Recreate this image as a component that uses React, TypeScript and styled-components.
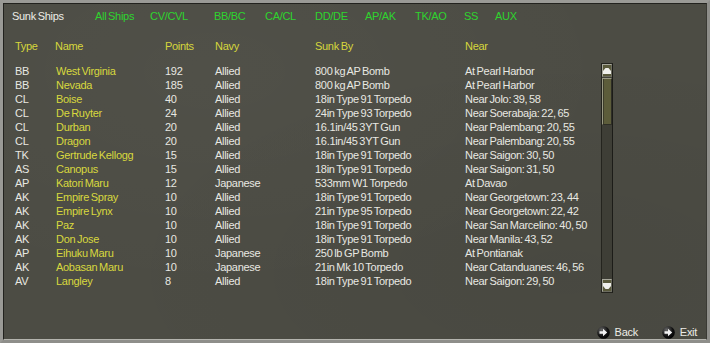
import React from "react";
import styled, { createGlobalStyle } from "styled-components";

const Global = createGlobalStyle`
  html, body { margin: 0; padding: 0; background: #4c4c44; }
  #root { width: 710px; height: 343px; }
  * { box-sizing: border-box; }
`;

const Frame = styled.div`
  width: 710px;
  height: 343px;
  border: 3px solid #8e8e8a;
  border-top-color: #9a9a96;
  border-left-color: #9a9a96;
  background: #4c4c44;
  font-family: "Liberation Sans", Arial, sans-serif;
  font-size: 11px;
  letter-spacing: -0.3px;
  word-spacing: -1px;
  color: #e8e8e2;
`;

const Inner = styled.div`
  height: 100%;
  border: 1px solid #22221e;
  border-bottom-color: #b4b4ae;
  border-right-color: #3a3a34;
  display: flex;
  flex-direction: column;
  background:
    radial-gradient(ellipse at 30% 20%, rgba(255,255,255,0.025), transparent 60%),
    radial-gradient(ellipse at 80% 80%, rgba(0,0,0,0.05), transparent 60%),
    #4c4c44;
`;

const TopBar = styled.div`
  display: flex;
  align-items: center;
  height: 14px;
  line-height: 14px;
  margin-top: 5px;
  padding-left: 8px;
`;

const Title = styled.div`
  width: 83px;
  color: #ececE6;
`;

const Tab = styled.div<{ $w: number }>`
  width: ${(p) => p.$w}px;
  color: #2ed42e;
  white-space: nowrap;
`;

const TableHead = styled.div`
  display: grid;
  grid-template-columns: 40px 110px 50px 100px 150px 1fr;
  height: 14px;
  line-height: 14px;
  margin-top: 16px;
  padding-left: 11px;
  color: #d6d63c;
`;

const Body = styled.div`
  display: flex;
  margin-top: 10px;
  padding-left: 11px;
  height: 230px;
`;

const List = styled.div`
  width: 586px;
  padding-top: 1px;
`;

const Row = styled.div`
  display: grid;
  grid-template-columns: 40px 110px 50px 100px 150px 1fr;
  height: 14px;
  line-height: 14px;
  white-space: nowrap;
`;

const Cell = styled.div<{ $name?: boolean }>`
  color: ${(p) => (p.$name ? "#d8d83e" : "#e8e8e2")};
  padding-left: ${(p) => (p.$name ? "1px" : "0")};
`;

const Scroll = styled.div`
  width: 12px;
  height: 230px;
  border: 1px solid #24241e;
  border-right-color: #1c1c18;
  background: #3e3e36;
  display: flex;
  flex-direction: column;
`;

const ScrollBtn = styled.div`
  height: 13px;
  border: 1px solid #a8a89c;
  border-right-color: #6c6c60;
  border-bottom-color: #6c6c60;
  background: #5a5a3c;
  display: flex;
  align-items: center;
  justify-content: center;
`;

const Thumb = styled.div`
  height: 47px;
  margin: 1px 0 0 0;
  border: 1px solid #9a9a84;
  border-right-color: #2e2e26;
  border-bottom-color: #2e2e26;
  background: #5c5c3a;
  box-shadow: inset 1px 0 0 #3c3c2a;
`;

const Track = styled.div`
  flex: 1;
`;

const Footer = styled.div`
  margin-top: auto;
  height: 12px;
  display: flex;
  justify-content: flex-end;
  align-items: center;
  padding-right: 9px;
  margin-bottom: 1px;
  gap: 24px;
`;

const NavButton = styled.div`
  display: flex;
  align-items: center;
  gap: 5px;
  color: #ececE6;
  font-size: 11px;
`;

const Arrow = ({ down }: { down?: boolean }) => (
  <svg width="8" height="6" viewBox="0 0 8 6" style={{ transform: down ? "rotate(180deg)" : undefined }}>
    <path d="M2.5 0 H5.5 L8 3 V6 H0 V3 Z" fill="#f0f0ec" />
  </svg>
);

const CircleArrow = () => (
  <svg width="13" height="13" viewBox="0 0 13 13">
    <defs>
      <radialGradient id="g" cx="0.35" cy="0.3" r="0.8">
        <stop offset="0" stopColor="#6a6a6a" />
        <stop offset="0.6" stopColor="#111" />
        <stop offset="1" stopColor="#000" />
      </radialGradient>
    </defs>
    <circle cx="6.5" cy="6.5" r="6.3" fill="url(#g)" />
    <path d="M2.5 5.2 H6 V2.8 L10.2 6.5 L6 10.2 V7.8 H2.5 Z" fill="#f2f2f2" />
  </svg>
);

const tabs: [string, number][] = [
  ["All Ships", 55],
  ["CV/CVL", 64],
  ["BB/BC", 51],
  ["CA/CL", 50],
  ["DD/DE", 50],
  ["AP/AK", 50],
  ["TK/AO", 49],
  ["SS", 31],
  ["AUX", 40],
];

const rows: string[][] = [
  ["BB", "West Virginia", "192", "Allied", "800 kg AP Bomb", "At Pearl Harbor"],
  ["BB", "Nevada", "185", "Allied", "800 kg AP Bomb", "At Pearl Harbor"],
  ["CL", "Boise", "40", "Allied", "18in Type 91 Torpedo", "Near Jolo: 39, 58"],
  ["CL", "De Ruyter", "24", "Allied", "24in Type 93 Torpedo", "Near Soerabaja: 22, 65"],
  ["CL", "Durban", "20", "Allied", "16.1in/45 3YT Gun", "Near Palembang: 20, 55"],
  ["CL", "Dragon", "20", "Allied", "16.1in/45 3YT Gun", "Near Palembang: 20, 55"],
  ["TK", "Gertrude Kellogg", "15", "Allied", "18in Type 91 Torpedo", "Near Saigon: 30, 50"],
  ["AS", "Canopus", "15", "Allied", "18in Type 91 Torpedo", "Near Saigon: 31, 50"],
  ["AP", "Katori Maru", "12", "Japanese", "533mm W1 Torpedo", "At Davao"],
  ["AK", "Empire Spray", "10", "Allied", "18in Type 91 Torpedo", "Near Georgetown: 23, 44"],
  ["AK", "Empire Lynx", "10", "Allied", "21in Type 95 Torpedo", "Near Georgetown: 22, 42"],
  ["AK", "Paz", "10", "Allied", "18in Type 91 Torpedo", "Near San Marcelino: 40, 50"],
  ["AK", "Don Jose", "10", "Allied", "18in Type 91 Torpedo", "Near Manila: 43, 52"],
  ["AP", "Eihuku Maru", "10", "Japanese", "250 lb GP Bomb", "At Pontianak"],
  ["AK", "Aobasan Maru", "10", "Japanese", "21in Mk 10 Torpedo", "Near Catanduanes: 46, 56"],
  ["AV", "Langley", "8", "Allied", "18in Type 91 Torpedo", "Near Saigon: 29, 50"],
];

export default function App() {
  return (
    <>
      <Global />
      <Frame>
        <Inner>
          <TopBar>
            <Title>Sunk Ships</Title>
            {tabs.map(([t, w]) => (
              <Tab key={t} $w={w}>{t}</Tab>
            ))}
          </TopBar>
          <TableHead>
            <div>Type</div>
            <div>Name</div>
            <div>Points</div>
            <div>Navy</div>
            <div>Sunk By</div>
            <div>Near</div>
          </TableHead>
          <Body>
            <List>
              {rows.map((r, i) => (
                <Row key={i}>
                  {r.map((c, j) => (
                    <Cell key={j} $name={j === 1}>{c}</Cell>
                  ))}
                </Row>
              ))}
            </List>
            <Scroll>
              <ScrollBtn><Arrow /></ScrollBtn>
              <Thumb />
              <Track />
              <ScrollBtn><Arrow down /></ScrollBtn>
            </Scroll>
          </Body>
          <Footer>
            <NavButton><CircleArrow />Back</NavButton>
            <NavButton><CircleArrow />Exit</NavButton>
          </Footer>
        </Inner>
      </Frame>
    </>
  );
}
